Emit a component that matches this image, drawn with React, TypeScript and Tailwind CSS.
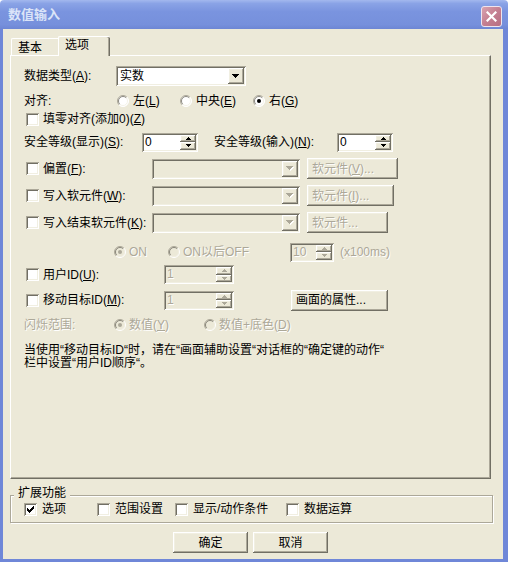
import React from "react";

const sunken =
  "shadow-[inset_1px_1px_0_#aca899,inset_-1px_-1px_0_#ffffff,inset_2px_2px_0_#716f64,inset_-2px_-2px_0_#f1efe2]";
const raised =
  "shadow-[inset_-1px_-1px_0_#716f64,inset_1px_1px_0_#ffffff,inset_-2px_-2px_0_#aca899,inset_2px_2px_0_#f1efe2]";
const dis = "text-[#aca899] [text-shadow:1px_1px_0_#ffffff]";

function DownArrow({ disabled }: { disabled?: boolean }) {
  const c = disabled ? "#aca899" : "#000000";
  return (
    <svg width="8" height="5" viewBox="0 0 8 5">
      {disabled && (
        <g fill="#ffffff">
          <rect x="1" y="1" width="7" height="1" />
          <rect x="2" y="2" width="5" height="1" />
          <rect x="3" y="3" width="3" height="1" />
          <rect x="4" y="4" width="1" height="1" />
        </g>
      )}
      <g fill={c}>
        <rect x="0" y="0" width="7" height="1" />
        <rect x="1" y="1" width="5" height="1" />
        <rect x="2" y="2" width="3" height="1" />
        <rect x="3" y="3" width="1" height="1" />
      </g>
    </svg>
  );
}

function SmallArrow({ up, disabled }: { up?: boolean; disabled?: boolean }) {
  const c = disabled ? "#aca899" : "#000000";
  return (
    <svg width="5" height="3" viewBox="0 0 5 3">
      <g fill={c} transform={up ? "translate(0,3) scale(1,-1)" : undefined}>
        <rect x="0" y="0" width="5" height="1" />
        <rect x="1" y="1" width="3" height="1" />
        <rect x="2" y="2" width="1" height="1" />
      </g>
    </svg>
  );
}

function Combo({ className, value, disabled }: { className: string; value?: string; disabled?: boolean }) {
  return (
    <div className={`flex h-[20px] p-[2px] ${sunken} ${disabled ? "bg-[#ece9d8]" : "bg-white"} ${className}`}>
      <div className="flex-1 px-[2px] leading-[16px]">{value}</div>
      <div className={`w-[16px] h-full flex items-center justify-center bg-[#ece9d8] ${raised}`}>
        <DownArrow disabled={disabled} />
      </div>
    </div>
  );
}

function Spin({ className, value, disabled }: { className: string; value: string; disabled?: boolean }) {
  return (
    <div className={`flex h-[19px] p-[2px] ${sunken} ${disabled ? "bg-[#ece9d8]" : "bg-white"} ${className}`}>
      <div className={`flex-1 px-[1px] leading-[15px] ${disabled ? dis : ""}`}>{value}</div>
      <div className="w-[16px] h-full flex flex-col">
        <div className={`flex-1 flex items-center justify-center bg-[#ece9d8] ${raised}`}>
          <SmallArrow up disabled={disabled} />
        </div>
        <div className={`flex-1 flex items-center justify-center bg-[#ece9d8] ${raised}`}>
          <SmallArrow disabled={disabled} />
        </div>
      </div>
    </div>
  );
}

function Check({ checked }: { checked?: boolean }) {
  return (
    <div className={`w-[13px] h-[13px] shrink-0 bg-white flex items-center justify-center ${sunken}`}>
      {checked && (
        <svg width="7" height="7" viewBox="0 0 7 7" fill="#000000">
          <rect x="6" y="0" width="1" height="1" />
          <rect x="5" y="1" width="2" height="1" />
          <rect x="0" y="2" width="1" height="1" />
          <rect x="4" y="2" width="3" height="1" />
          <rect x="0" y="3" width="2" height="1" />
          <rect x="3" y="3" width="3" height="1" />
          <rect x="0" y="4" width="5" height="1" />
          <rect x="1" y="5" width="3" height="1" />
          <rect x="2" y="6" width="1" height="1" />
        </svg>
      )}
    </div>
  );
}

function Radio({ on, disabled }: { on?: boolean; disabled?: boolean }) {
  return (
    <svg width="12" height="12" viewBox="0 0 12 12" className="shrink-0">
      <circle cx="6" cy="6" r="5.5" fill={disabled ? "#ece9d8" : "#ffffff"} />
      <path d="M2.1 9.9 A5.5 5.5 0 0 1 9.9 2.1" stroke="#aca899" fill="none" />
      <path d="M9.9 2.1 A5.5 5.5 0 0 1 2.1 9.9" stroke="#ffffff" fill="none" />
      <path d="M2.8 9.2 A4.5 4.5 0 0 1 9.2 2.8" stroke="#716f64" fill="none" strokeWidth="0.8" />
      <path d="M9.2 2.8 A4.5 4.5 0 0 1 2.8 9.2" stroke="#f1efe2" fill="none" strokeWidth="0.8" />
      {on && <circle cx="6" cy="6" r="2" fill={disabled ? "#aca899" : "#000000"} />}
    </svg>
  );
}

function Btn({ className, children, disabled, left }: { className: string; children: React.ReactNode; disabled?: boolean; left?: boolean }) {
  return (
    <div
      className={`flex items-center h-[21px] bg-[#ece9d8] ${raised} ${left ? "justify-start pl-[5px]" : "justify-center"} ${disabled ? dis : ""} ${className}`}
    >
      {children}
    </div>
  );
}

export default function App() {
  return (
    <div className="w-[508px] h-[562px] flex flex-col overflow-hidden bg-white text-[12px] leading-[14px] text-black [font-family:'Liberation_Sans','Noto_Sans_CJK_SC',sans-serif]">
      {/* Title bar */}
      <div className="h-[29px] shrink-0 flex items-start justify-between rounded-t-[4px] bg-[linear-gradient(180deg,#a3b8ee_0%,#8aa3e6_12%,#7a94df_40%,#7690dc_85%,#6d86d4_100%)]">
        <div className="pl-[8px] pt-[7px] text-[13px] leading-[16px] font-bold text-[#dbe4f8]">数值输入</div>
        <div className="mt-[6px] mr-[6px] w-[21px] h-[21px] rounded-[3px] border border-[#eee4ee] bg-[linear-gradient(135deg,#d9a3b0_0%,#c47f91_50%,#b76e82_100%)] flex items-center justify-center">
          <svg width="11" height="11" viewBox="0 0 11 11">
            <path d="M1.5 1.5 L9.5 9.5 M9.5 1.5 L1.5 9.5" stroke="#ffffff" strokeWidth="2.2" strokeLinecap="square" />
          </svg>
        </div>
      </div>

      {/* Body */}
      <div className="flex-1 flex flex-col bg-[#ece9d8] border-l-[3px] border-r-[5px] border-b-[3px] border-[#6f87d8]">
        {/* Tabs */}
        <div className="mt-[7px] ml-[8px] flex items-end h-[19px]">
          <div className="w-[47px] h-[17px] border-l border-t border-white rounded-tl-[2px] pl-[6px] pt-[2px] leading-[14px]">基本</div>
          <div className="relative z-10 w-[52px] h-[20px] -mb-px border-l border-t border-white rounded-t-[2px] bg-[#ece9d8] shadow-[inset_-1px_0_0_#716f64,inset_-2px_0_0_#aca899] pl-[6px] pt-[1px] leading-[14px]">
            选项
          </div>
        </div>

        {/* Panel */}
        <div className="ml-[7px] w-[481px] h-[424px] border-t border-l border-white border-r border-b border-r-[#716f64] border-b-[#716f64] shadow-[inset_-1px_-1px_0_#aca899] pt-[10px] pl-[13px] flex flex-col">
          {/* r1 */}
          <div className="flex items-center h-[20px]">
            <div className="w-[92px]">
              数据类型(<u>A</u>):
            </div>
            <Combo className="w-[130px]" value="实数" />
          </div>
          {/* r2 */}
          <div className="flex items-center h-[18px] mt-[6px]">
            <div className="w-[93px]">对齐:</div>
            <div className="w-[63px] flex items-center gap-[4px]">
              <Radio />
              <span>
                左(<u>L</u>)
              </span>
            </div>
            <div className="w-[73px] flex items-center gap-[4px]">
              <Radio />
              <span>
                中央(<u>E</u>)
              </span>
            </div>
            <div className="flex items-center gap-[4px]">
              <Radio on />
              <span>
                右(<u>G</u>)
              </span>
            </div>
          </div>
          {/* r3 */}
          <div className="flex items-center h-[18px] ml-[2px] gap-[4px]">
            <Check />
            <span>
              填零对齐(添加0)(<u>Z</u>)
            </span>
          </div>
          {/* r4 */}
          <div className="flex items-center h-[20px] mt-[4px]">
            <div className="w-[118px]">
              安全等级(显示)(<u>S</u>):
            </div>
            <Spin className="w-[56px]" value="0" />
            <div className="w-[123px] ml-[16px]">
              安全等级(输入)(<u>N</u>):
            </div>
            <Spin className="w-[56px]" value="0" />
          </div>
          {/* r5 */}
          <div className="flex items-center h-[21px] mt-[6px] ml-[2px]">
            <Check />
            <div className="w-[109px] ml-[4px]">
              偏置(<u>F</u>):
            </div>
            <Combo className="w-[148px]" disabled />
            <Btn className="w-[91px] ml-[7px]" disabled left>
              软元件(<u>V</u>)...
            </Btn>
          </div>
          {/* r6 */}
          <div className="flex items-center h-[21px] mt-[6px] ml-[2px]">
            <Check />
            <div className="w-[109px] ml-[4px]">
              写入软元件(<u>W</u>):
            </div>
            <Combo className="w-[148px]" disabled />
            <Btn className="w-[87px] ml-[7px]" disabled left>
              软元件(<u>I</u>)...
            </Btn>
          </div>
          {/* r7 */}
          <div className="flex items-center h-[21px] mt-[6px] ml-[2px]">
            <Check />
            <div className="w-[109px] ml-[4px]">
              写入结束软元件(<u>K</u>):
            </div>
            <Combo className="w-[148px]" disabled />
            <Btn className="w-[81px] ml-[7px]" disabled left>
              软元件...
            </Btn>
          </div>
          {/* r8 */}
          <div className="flex items-center h-[20px] mt-[9px]">
            <div className="w-[90px]" />
            <div className={`w-[54px] flex items-center gap-[3px] ${dis}`}>
              <Radio on disabled />
              <span>ON</span>
            </div>
            <div className={`w-[122px] flex items-center gap-[3px] ${dis}`}>
              <Radio disabled />
              <span>ON以后OFF</span>
            </div>
            <Spin className="w-[44px]" value="10" disabled />
            <span className={`ml-[6px] ${dis}`}>(x100ms)</span>
          </div>
          {/* r9 */}
          <div className="flex items-center h-[21px] mt-[2px] ml-[2px]">
            <Check />
            <div className="w-[121px] ml-[4px]">
              用户ID(<u>U</u>):
            </div>
            <Spin className="w-[70px]" value="1" disabled />
          </div>
          {/* r10 */}
          <div className="flex items-center h-[22px] mt-[4px] ml-[2px]">
            <Check />
            <div className="w-[121px] ml-[4px]">
              移动目标ID(<u>M</u>):
            </div>
            <Spin className="w-[70px]" value="1" disabled />
            <Btn className="w-[97px] ml-[57px]" left>
              画面的属性...
            </Btn>
          </div>
          {/* r11 */}
          <div className={`flex items-center h-[17px] mt-[5px] ${dis}`}>
            <div className="w-[90px]">闪烁范围:</div>
            <div className="w-[90px] flex items-center gap-[3px]">
              <Radio on disabled />
              <span>
                数值(<u>Y</u>)
              </span>
            </div>
            <div className="flex items-center gap-[3px]">
              <Radio disabled />
              <span>
                数值+底色(<u>D</u>)
              </span>
            </div>
          </div>
          {/* paragraph */}
          <div className="mt-[11px] leading-[13px] whitespace-nowrap">
            <div>当使用“移动目标ID“时，请在“画面辅助设置“对话框的“确定键的动作“</div>
            <div>栏中设置“用户ID顺序“。</div>
          </div>
        </div>

        {/* Extension group */}
        <div className="relative mt-[16px] ml-[7px] w-[483px] h-[28px] border border-[#aca899] shadow-[inset_1px_1px_0_#ffffff,1px_1px_0_#ffffff] flex items-center pl-[13px]">
          <div className="absolute -top-[10px] left-[3px] px-[4px] bg-[#ece9d8] leading-[14px]">扩展功能</div>
          <div className="w-[73px] flex items-center gap-[5px]">
            <Check checked />
            <span>选项</span>
          </div>
          <div className="w-[78px] flex items-center gap-[5px]">
            <Check />
            <span>范围设置</span>
          </div>
          <div className="w-[111px] flex items-center gap-[5px]">
            <Check />
            <span>显示/动作条件</span>
          </div>
          <div className="flex items-center gap-[5px]">
            <Check />
            <span>数据运算</span>
          </div>
        </div>

        {/* Buttons */}
        <div className="mt-[9px] flex justify-center gap-[5px] pr-[5px]">
          <Btn className="w-[75px]">确定</Btn>
          <Btn className="w-[75px]">取消</Btn>
        </div>
      </div>
    </div>
  );
}
